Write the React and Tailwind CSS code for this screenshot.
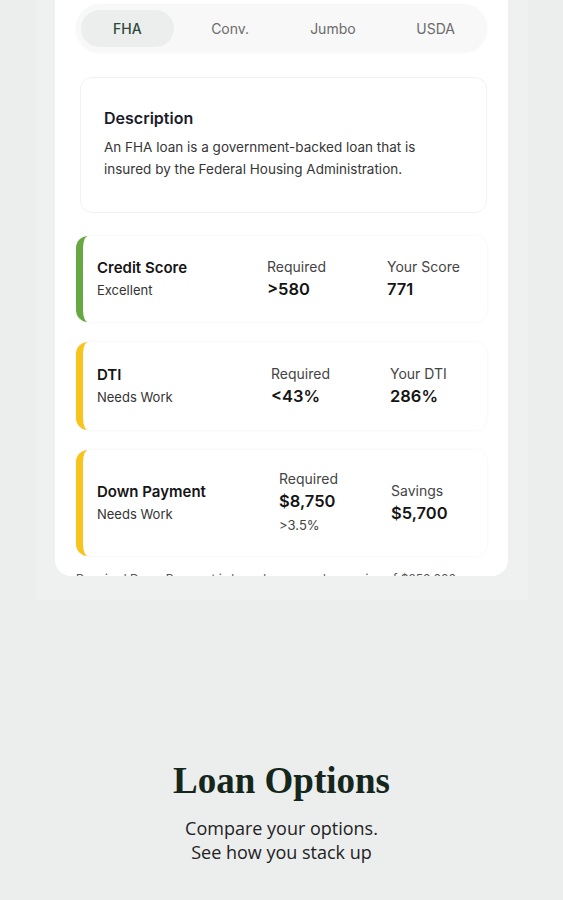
import React from 'react';

const tabs = ['FHA', 'Conv.', 'Jumbo', 'USDA'];

const Metric = ({ label, value, note, className }) => (
  <div className={className}>
    <p className="text-[14px] leading-[20px] text-[#444]">{label}</p>
    <p className="text-[16.5px] leading-[24px] font-semibold text-[#151515]">{value}</p>
    {note && <p className="text-[13px] leading-[24px] text-[#444]">{note}</p>}
  </div>
);

const FactorCard = ({ title, status, bar, height, cols, required, mine }) => (
  <div
    className={`flex items-center rounded-xl border-l-[7px] bg-white shadow-[0_0_3px_rgba(0,0,0,0.06)] ${bar} ${height}`}
  >
    <div className={`pl-[14px] ${cols[0]}`}>
      <p className="text-[15px] leading-[20px] font-semibold text-[#151515]">{title}</p>
      <p className="text-[13px] leading-[20px] text-[#333] mt-[2px]">{status}</p>
    </div>
    <Metric className={cols[1]} {...required} />
    <Metric className="flex-1" {...mine} />
  </div>
);

export default function App() {
  return (
    <div
      className="w-[563px] h-[900px] bg-[#eceeed] overflow-hidden"
      style={{ fontFamily: 'Inter, "Liberation Sans", sans-serif' }}
    >
      {/* device shadow band */}
      <div className="ml-[36px] w-[492px] bg-[#eff0f0] pb-[24px]">
        <div className="ml-[19px] w-[453px] h-[576px] bg-white rounded-b-2xl overflow-hidden px-[21px] pt-[4px]">
          {/* tabs */}
          <div className="flex h-[48px] items-center rounded-full bg-[#f7f8f7] shadow-[0_1px_3px_rgba(0,0,0,0.04)]">
            {tabs.map((t, i) => (
              <div key={t} className="flex-1 flex justify-center">
                <div
                  className={`w-[93px] h-[37px] flex items-center justify-center rounded-full text-[14px] ${
                    i === 0 ? 'bg-[#eceeed] text-[#2e4a38] font-medium' : 'text-[#6b6b6b]'
                  }`}
                >
                  {t}
                </div>
              </div>
            ))}
          </div>

          {/* description */}
          <div className="mt-[25px] ml-[4px] h-[136px] rounded-xl bg-white border border-[#f1f2f1] px-[23px] pt-[28px]">
            <p className="text-[16px] leading-[24px] font-semibold text-[#1b1b2a]">Description</p>
            <p className="mt-[6px] text-[13.5px] leading-[22px] text-[#363636]">
              An FHA loan is a government-backed loan that is insured by the Federal Housing Administration.
            </p>
          </div>

          <div className="mt-[23px] flex flex-col gap-[20px]">
            <FactorCard
              title="Credit Score"
              status="Excellent"
              bar="border-[#68a843]"
              height="h-[86px]"
              cols={['w-[184px]', 'w-[120px]']}
              required={{ label: 'Required', value: '>580' }}
              mine={{ label: 'Your Score', value: '771' }}
            />
            <FactorCard
              title="DTI"
              status="Needs Work"
              bar="border-[#f6c41a]"
              height="h-[88px]"
              cols={['w-[188px]', 'w-[119px]']}
              required={{ label: 'Required', value: '<43%' }}
              mine={{ label: 'Your DTI', value: '286%' }}
            />
            <FactorCard
              title="Down Payment"
              status="Needs Work"
              bar="border-[#f6c41a]"
              height="h-[106px]"
              cols={['w-[196px]', 'w-[112px]']}
              required={{ label: 'Required', value: '$8,750', note: '>3.5%' }}
              mine={{ label: 'Savings', value: '$5,700' }}
            />
          </div>

          <p className="mt-[15px] whitespace-nowrap text-[12px] leading-[16px] text-[#555]">
            Required Down Payment is based on a purchase price of $250,000
          </p>
        </div>
      </div>

      {/* caption */}
      <div className="mt-[158px] flex flex-col items-center">
        <h1
          className="text-[37px] leading-[46px] font-bold text-[#15271c]"
          style={{ fontFamily: '"Liberation Serif", "DejaVu Serif", serif' }}
        >
          Loan Options
        </h1>
        <div
          className="mt-[12px] text-center text-[18px] leading-[24px] text-[#222]"
          style={{ fontFamily: '"Open Sans", "Noto Sans", sans-serif' }}
        >
          <p>Compare your options.</p>
          <p>See how you stack up</p>
        </div>
      </div>
    </div>
  );
}
